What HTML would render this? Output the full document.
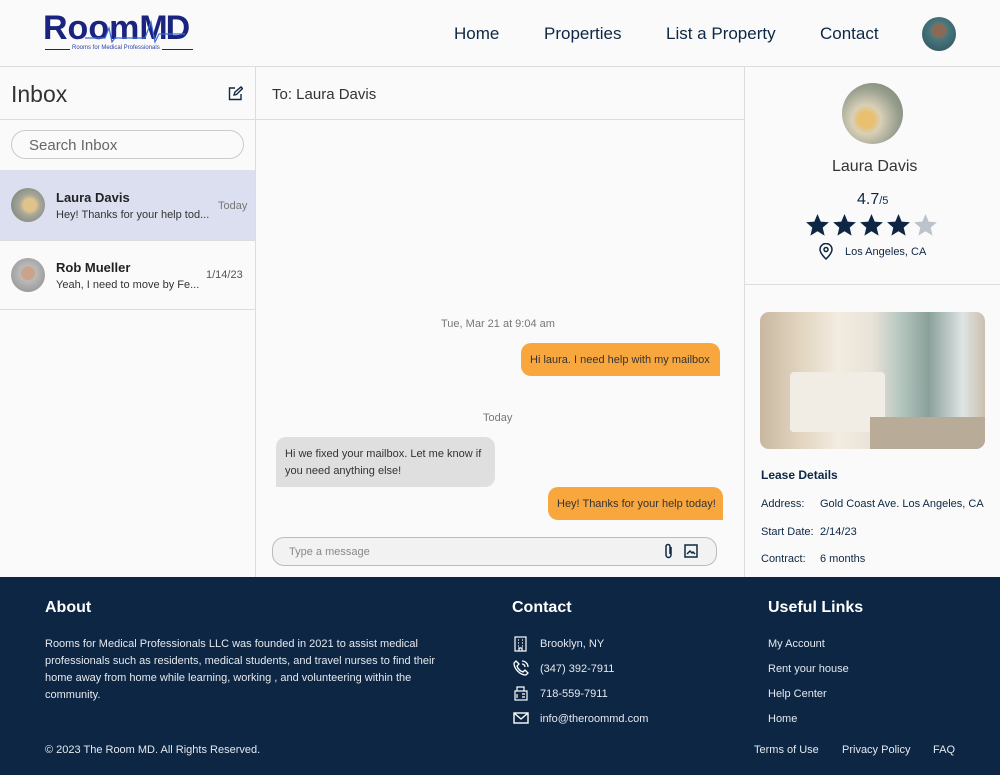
<!DOCTYPE html>
<html><head><style>
*{box-sizing:border-box;margin:0;padding:0}
body{width:1000px;height:775px;overflow:hidden;background:#fafafa;font-family:"Liberation Sans",sans-serif;color:#222;position:relative}
.abs{position:absolute}
.hdr{left:0;top:0;width:1000px;height:67px;border-bottom:1px solid #ddd;background:#fafafa}
.nav{font-size:17px;color:#0d2744;top:24px}
.t{white-space:nowrap}
.line{background:#ddd}
.foot{left:0;top:577px;width:1000px;height:198px;background:#0c2644;color:#fff}
.foot .t{position:absolute}
.fs{font-size:11px;color:#e6e9ee}
.bub{position:absolute;font-size:11px;color:#333;padding:0 9px}
</style></head><body>
<div class="abs hdr"></div>
<!-- logo -->
<div class="abs t" style="left:43px;top:9px;font-size:34px;font-weight:bold;color:#1a237e;letter-spacing:0px">Room<span style="letter-spacing:-2px">MD</span></div>
<div class="abs" style="left:45px;top:49px;width:148px;height:1px;background:#1a237e"></div>
<div class="abs t" style="left:70px;top:45px;font-size:6px;color:#2a3fa8;background:#fafafa;padding:0 2px">Rooms for Medical Professionals</div>
<svg class="abs" style="left:85px;top:18px" width="110" height="26"><polyline points="0,20 20,20 24,10 27,24 30,20 60,20 66,4 70,24 74,16 100,16" fill="none" stroke="#3a6fd8" stroke-width="1.2"/></svg>
<div class="abs nav t" style="left:454px">Home</div>
<div class="abs nav t" style="left:544px">Properties</div>
<div class="abs nav t" style="left:666px">List a Property</div>
<div class="abs nav t" style="left:820px">Contact</div>
<div class="abs" style="left:922px;top:17px;width:34px;height:34px;border-radius:50%;background:radial-gradient(circle at 50% 40%,#8a6a55 0 28%,#4a7a80 30%,#2e4e5a)"></div>

<!-- columns -->
<div class="abs line" style="left:255px;top:67px;width:1px;height:510px"></div>
<div class="abs line" style="left:744px;top:67px;width:1px;height:510px"></div>
<!-- inbox -->
<div class="abs t" style="left:11px;top:81px;font-size:23px;color:#333">Inbox</div>
<svg class="abs" style="left:228px;top:86px" width="15" height="15" fill="none" stroke="#0d2744" stroke-width="1.4"><path d="M7 2H1.5v11.5H13V8"/><path d="M6 9l1-3 6-5 1.5 1.5-6 6z"/></svg>
<div class="abs" style="left:0;top:119px;width:255px;height:1px;background:#ddd"></div>
<div class="abs" style="left:11px;top:130px;width:233px;height:29px;border:1px solid #ccc;border-radius:15px;background:#fafafa"></div>
<div class="abs t" style="left:29px;top:137px;font-size:15px;color:#666">Search Inbox</div>
<div class="abs" style="left:0;top:170px;width:255px;height:70px;background:#dcdff0"></div>
<div class="abs line" style="left:0;top:240px;width:255px;height:1px"></div>
<div class="abs line" style="left:0;top:309px;width:255px;height:1px"></div>
<div class="abs" style="left:11px;top:188px;width:34px;height:34px;border-radius:50%;background:radial-gradient(circle at 55% 50%,#e0c38a 0 25%,#a9a79a 40%,#6b7a6e)"></div>
<div class="abs t" style="left:56px;top:190px;font-size:13px;font-weight:bold;color:#222">Laura Davis</div>
<div class="abs t" style="left:56px;top:209px;font-size:11px;color:#333">Hey! Thanks for your help tod...</div>
<div class="abs t" style="left:218px;top:200px;font-size:11px;color:#777">Today</div>
<div class="abs" style="left:11px;top:258px;width:34px;height:34px;border-radius:50%;background:radial-gradient(circle at 50% 45%,#c9a48a 0 26%,#bbb 30%,#888)"></div>
<div class="abs t" style="left:56px;top:260px;font-size:13px;font-weight:bold;color:#222">Rob Mueller</div>
<div class="abs t" style="left:56px;top:279px;font-size:11px;color:#333">Yeah, I need to move by Fe...</div>
<div class="abs t" style="left:206px;top:269px;font-size:11px;color:#555">1/14/23</div>

<!-- chat -->
<div class="abs t" style="left:272px;top:86px;font-size:15px;color:#333">To: Laura Davis</div>
<div class="abs line" style="left:256px;top:119px;width:488px;height:1px"></div>
<div class="abs t" style="left:441px;top:318px;font-size:11px;color:#777">Tue, Mar 21 at 9:04 am</div>
<div class="bub t" style="left:521px;top:343px;width:199px;height:33px;line-height:34px;background:#f8a73f;border-radius:10px 10px 0 10px">Hi laura. I need help with my mailbox</div>
<div class="abs t" style="left:483px;top:412px;font-size:11px;color:#777">Today</div>
<div class="bub" style="left:276px;top:437px;width:219px;height:50px;padding-top:9px;line-height:17px;background:#dfdfdf;border-radius:10px 10px 10px 0">Hi we fixed your mailbox. Let me know if you need anything else!</div>
<div class="bub t" style="left:548px;top:487px;width:175px;height:33px;line-height:34px;background:#f8a73f;border-radius:10px 10px 0 10px">Hey! Thanks for your help today!</div>
<div class="abs" style="left:272px;top:537px;width:445px;height:29px;border:1px solid #bbb;border-radius:12px;background:#f2f2f2"></div>
<div class="abs t" style="left:289px;top:546px;font-size:11px;color:#888">Type a message</div>
<svg class="abs" style="left:662px;top:543px" width="14" height="16" fill="none" stroke="#0d2744" stroke-width="1.5"><path d="M9 4v8a2.5 2.5 0 0 1-5 0V3.5a2 2 0 0 1 4 0V11"/></svg>
<svg class="abs" style="left:684px;top:544px" width="14" height="14" fill="none" stroke="#0d2744" stroke-width="1.5"><rect x="1" y="1" width="12" height="12"/><path d="M3 10l3-3 2 2 1-1 2 2" /></svg>

<!-- right -->
<div class="abs" style="left:842px;top:83px;width:61px;height:61px;border-radius:50%;background:radial-gradient(circle at 40% 60%,#e8c070 0 15%,#d8d0b8 28%,#9aa090 60%,#6e7a6a)"></div>
<div class="abs t" style="left:832px;top:158px;font-size:16px;color:#333">Laura Davis</div>
<div class="abs t" style="left:857px;top:191px;font-size:16px;color:#0d2744">4.7<span style="font-size:11px">/5</span></div>
<svg class="abs" style="left:805px;top:213px" width="135" height="26">
<g fill="#0c2644"><path id="s" d="M12.5 1l3.2 7.6 8.2.6-6.2 5.4 1.9 8L12.5 18.2 5.4 22.6l1.9-8L1.1 9.2l8.2-.6z"/><use href="#s" x="27"/><use href="#s" x="54"/><use href="#s" x="81"/></g><use href="#s" x="108" fill="#bcc3cb"/></svg>
<svg class="abs" style="left:818px;top:243px" width="16" height="17" fill="none" stroke="#0d2744" stroke-width="1.5"><path d="M8 16s-6-5.5-6-9.5a6 6 0 0 1 12 0C14 10.5 8 16 8 16z"/><circle cx="8" cy="6.5" r="2"/></svg>
<div class="abs t" style="left:845px;top:246px;font-size:11px;color:#0d2744">Los Angeles, CA</div>
<div class="abs line" style="left:745px;top:284px;width:255px;height:1px"></div>
<div class="abs" style="left:760px;top:312px;width:225px;height:137px;border-radius:9px;background:linear-gradient(90deg,#c9b8a0 0%,#e4d8c4 20%,#f3ece0 35%,#e8e2d8 50%,#b6c8c0 62%,#8aa09a 75%,#dfe4e4 90%,#c9c0b0 100%);overflow:hidden">
<div style="position:absolute;left:30px;top:60px;width:95px;height:60px;background:#f2ede4;border-radius:4px"></div>
<div style="position:absolute;left:110px;top:105px;width:115px;height:32px;background:#b8ab98"></div></div>
<div class="abs t" style="left:761px;top:468px;font-size:12px;font-weight:bold;color:#0d2744">Lease Details</div>
<div class="abs t" style="left:761px;top:498px;font-size:11px;color:#0d2744">Address:</div>
<div class="abs t" style="left:820px;top:498px;font-size:11px;color:#0d2744">Gold Coast Ave. Los Angeles, CA</div>
<div class="abs t" style="left:761px;top:526px;font-size:11px;color:#0d2744">Start Date:</div>
<div class="abs t" style="left:820px;top:526px;font-size:11px;color:#0d2744">2/14/23</div>
<div class="abs t" style="left:761px;top:553px;font-size:11px;color:#0d2744">Contract:</div>
<div class="abs t" style="left:820px;top:553px;font-size:11px;color:#0d2744">6 months</div>

<!-- footer -->
<div class="abs foot">
<div class="t" style="left:45px;top:22px;font-size:16px;font-weight:bold">About</div>
<div class="fs" style="position:absolute;left:45px;top:59px;width:400px;line-height:17px">Rooms for Medical Professionals LLC was founded in 2021 to assist medical professionals such as residents, medical students, and travel nurses to find their home away from home while learning, working , and volunteering within the community.</div>
<div class="t" style="left:512px;top:22px;font-size:16px;font-weight:bold">Contact</div>
<svg style="position:absolute;left:513px;top:59px" width="15" height="16" fill="none" stroke="#fff" stroke-width="1.2"><rect x="2" y="1" width="11" height="14"/><path d="M5 4h1M9 4h1M5 7h1M9 7h1M5 10h1M9 10h1M6 15v-3h3v3"/></svg>
<div class="t fs" style="left:540px;top:61px">Brooklyn, NY</div>
<svg style="position:absolute;left:513px;top:83px" width="16" height="16" fill="none" stroke="#fff" stroke-width="1.3"><path d="M3 1l3 3-2 2c1 3 3 5 6 6l2-2 3 3-2 2C7 15 1 9 1 3z"/><path d="M9 4a3 3 0 0 1 3 3M9 1a6 6 0 0 1 6 6"/></svg>
<div class="t fs" style="left:540px;top:86px">(347) 392-7911</div>
<svg style="position:absolute;left:514px;top:108px" width="14" height="16" fill="none" stroke="#fff" stroke-width="1.2"><rect x="1" y="6" width="12" height="9"/><path d="M3 6V2h7v4M8 9h3M8 12h3M3 9v4"/></svg>
<div class="t fs" style="left:540px;top:111px">718-559-7911</div>
<svg style="position:absolute;left:513px;top:135px" width="16" height="12" fill="none" stroke="#fff" stroke-width="1.4"><rect x="1" y="1" width="14" height="10"/><path d="M1 1l7 6 7-6"/></svg>
<div class="t fs" style="left:540px;top:136px">info@theroommd.com</div>
<div class="t" style="left:768px;top:22px;font-size:16px;font-weight:bold">Useful Links</div>
<div class="t fs" style="left:768px;top:61px">My Account</div>
<div class="t fs" style="left:768px;top:86px">Rent your house</div>
<div class="t fs" style="left:768px;top:111px">Help Center</div>
<div class="t fs" style="left:768px;top:136px">Home</div>
<div class="t fs" style="left:45px;top:167px">© 2023 The Room MD. All Rights Reserved.</div>
<div class="t fs" style="left:754px;top:167px">Terms of Use</div>
<div class="t fs" style="left:842px;top:167px">Privacy Policy</div>
<div class="t fs" style="left:933px;top:167px">FAQ</div>
</div>
</body></html>
